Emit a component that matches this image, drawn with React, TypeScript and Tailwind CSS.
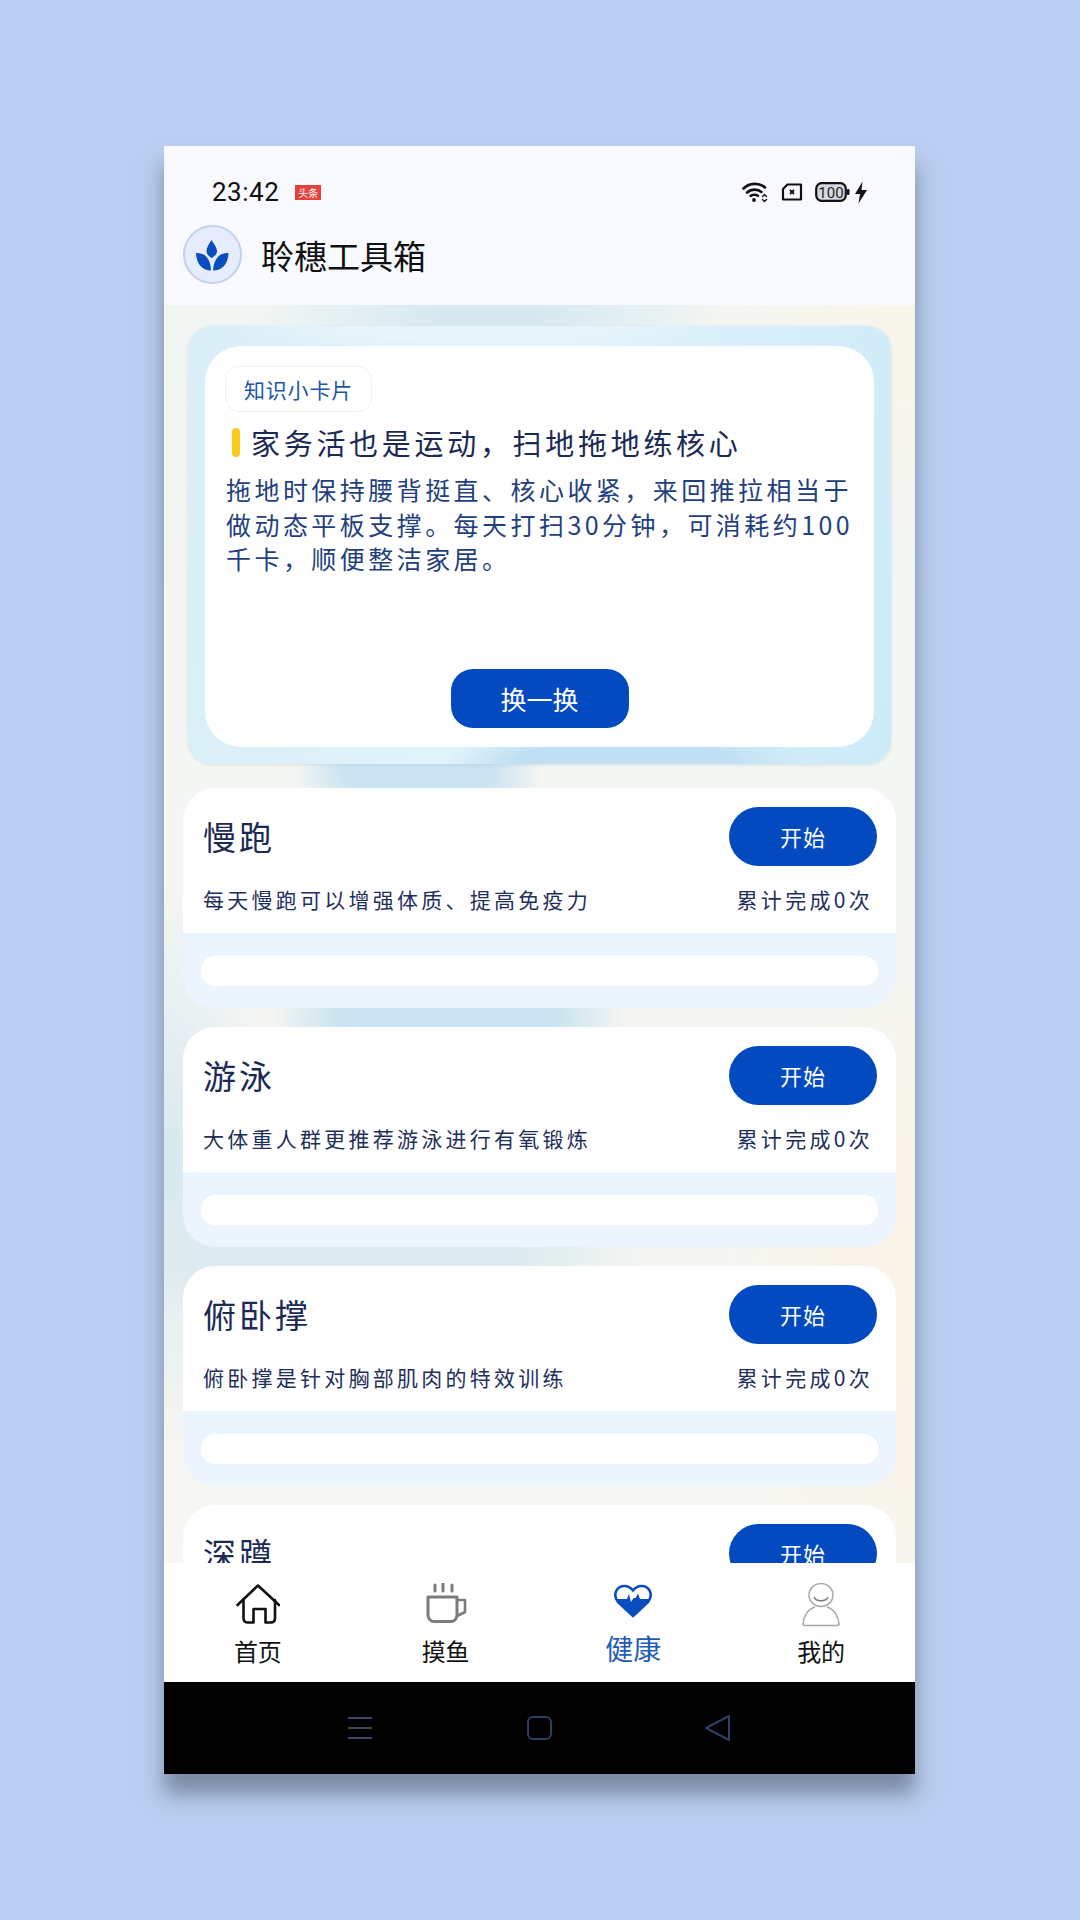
import React from "react";

const tasks = [
  { name: "慢跑", desc: "每天慢跑可以增强体质、提高免疫力" },
  { name: "游泳", desc: "大体重人群更推荐游泳进行有氧锻炼" },
  { name: "俯卧撑", desc: "俯卧撑是针对胸部肌肉的特效训练" },
  { name: "深蹲", desc: "" },
];

function TaskCard({ name, desc }: { name: string; desc: string }) {
  return (
    <div className="h-[220px] shrink-0 rounded-[32px] overflow-hidden bg-[#ecf4fd] flex flex-col">
      <div className="h-[145px] bg-white pl-[20px] pr-[19px] pt-[19px]">
        <div className="flex items-center justify-between h-[59px]">
          <span className="text-[33px] leading-[40px] tracking-[3px] text-[#1a2a55] -translate-y-[1px]">{name}</span>
          <button className="w-[148px] h-[59px] rounded-full bg-[#0349c0] text-white text-[22px] tracking-[1px]">开始</button>
        </div>
        {desc && (
          <div className="flex items-center justify-between mt-[18px] pr-[4px] text-[21px] leading-[30px] tracking-[3.25px] text-[#1f2f5c]">
            <span>{desc}</span>
            <span className="tracking-[3.3px]">累计完成0次</span>
          </div>
        )}
      </div>
      <div className="px-[18px] pt-[23px]">
        <div className="h-[30px] rounded-[14px] bg-white" />
      </div>
    </div>
  );
}

function TabLabel({ children, active }: { children: React.ReactNode; active?: boolean }) {
  return (
    <span className={active ? "text-[28px] leading-[36px] text-[#1f5cb8]" : "text-[24px] leading-[36px] text-[#111]"}>{children}</span>
  );
}

export default function App() {
  return (
    <div className="w-[1080px] h-[1920px] bg-[#b9cef0] pt-[146px] pl-[164px] overflow-hidden [font-family:'Noto_Sans_CJK_SC','Roboto',sans-serif]">
      <div className="w-[751px] h-[1628px] flex flex-col shadow-[0_20px_20px_rgba(60,70,90,0.5)]">
        {/* status + header */}
        <div className="h-[159px] shrink-0 bg-[#f8faff]">
          <div className="flex items-center justify-between h-[36px] pt-[28px] pl-[48px] pr-[47px] box-content">
            <div className="flex items-center">
              <span className="[font-family:'Roboto',sans-serif] text-[26px] leading-[32px] tracking-[0.5px] text-[#111]">23:42</span>
              <span className="ml-[16px] w-[26px] h-[15px] bg-[#e5413c] text-white text-[10px] leading-[15px] text-center">头条</span>
            </div>
            <div className="flex items-center">
              <svg width="27" height="22" viewBox="0 0 27 22" fill="none" stroke="#111" strokeLinecap="round">
                <path d="M1.5 7.5C7.5 1.5 17.5 1.5 23 6.5" strokeWidth="2.6" />
                <path d="M5 11.5C9 7.8 15.5 7.8 19.5 11" strokeWidth="2.6" />
                <path d="M8.5 15C10.5 13.3 14 13.3 16 14.8" strokeWidth="2.4" />
                <circle cx="12" cy="19" r="1.9" fill="#111" stroke="none" />
                <path d="M20.5 15.5l2-2 2 2M20.5 18.5l2 2 2-2" strokeWidth="1.4" />
              </svg>
              <svg className="ml-[12px]" width="22" height="18" viewBox="0 0 22 18" fill="none">
                <path d="M6.5 1.5H20V16.5H2V6Z" stroke="#111" strokeWidth="2.2" strokeLinejoin="round" />
                <path d="M9 7l4 4M13 7l-4 4" stroke="#111" strokeWidth="1.8" />
              </svg>
              <svg className="ml-[12px]" width="35" height="20" viewBox="0 0 35 20">
                <rect x="1.2" y="1.2" width="29.6" height="17.6" rx="5.5" fill="#d4d8e4" stroke="#111" strokeWidth="2.2" />
                <rect x="32" y="7" width="2.5" height="6" rx="1" fill="#111" />
                <text x="16" y="15.5" textAnchor="middle" fontSize="15" fill="#222" fontFamily="Roboto, sans-serif">100</text>
              </svg>
              <svg className="ml-[4px]" width="14" height="23" viewBox="0 0 14 23">
                <path d="M8.5 0.5L1 13h5l-1.5 9.5L13 9H7.5Z" fill="#111" />
              </svg>
            </div>
          </div>
          <div className="flex items-center pl-[19px] mt-[15px]">
            <div className="w-[59px] h-[59px] rounded-full bg-[#e6ecfb] border-2 border-[#c0d1ee] flex items-center justify-center">
              <svg width="35" height="32" viewBox="0 0 35 32" fill="#0a4dbf">
                <path d="M16.5 1C13.5 5.5 11.5 9 11.5 12C11.5 15 14 17.5 16.5 19C19.5 17.5 22 15 22 12C22 9 19.5 5.5 16.5 1Z" />
                <path d="M1 14C7 13.5 15.5 16.5 16 31.5C8 31.5 1.5 26 1 14Z" />
                <path d="M33.5 14C27.5 13.5 19 16.5 18 31.5C26.5 31.5 33 26 33.5 14Z" />
              </svg>
            </div>
            <span className="ml-[19px] text-[33px] leading-[44px] text-[#111]">聆穗工具箱</span>
          </div>
        </div>

        {/* scrolling content */}
        <div className="h-[1258px] shrink-0 overflow-hidden px-[19px] pt-[21px] flex flex-col bg-[radial-gradient(ellipse_240px_50px_at_325px_10px,#d6e9f1_20%,transparent_100%),radial-gradient(ellipse_125px_42px_at_255px_470px,#cbe4f2_60%,transparent_100%),radial-gradient(ellipse_180px_44px_at_285px_712px,#c9e3f0_60%,transparent_100%),radial-gradient(ellipse_300px_60px_at_190px_950px,#dcebef_55%,transparent_100%),radial-gradient(ellipse_110px_280px_at_0px_860px,#d6e8f2_0%,transparent_100%),radial-gradient(ellipse_200px_400px_at_100%_1000px,#fbf3e6_0%,transparent_100%),radial-gradient(ellipse_260px_220px_at_100%_40px,#f9f5ea_0%,transparent_100%),linear-gradient(#f2f6f3,#f6f6f2)]">
          <div className="mx-[5px] h-[438px] shrink-0 rounded-[24px] px-[17px] pt-[20px] bg-[radial-gradient(ellipse_180px_40px_at_62%_100%,#bfe0f2_60%,transparent_100%),radial-gradient(ellipse_240px_30px_at_40%_0%,#e6f4fb_50%,transparent_100%),linear-gradient(100deg,#d9eef8,#e2f3fa_45%,#cdebf9)] shadow-[0_1px_3px_rgba(120,150,180,0.25)]">
            <div className="h-[401px] rounded-[36px] bg-white pl-[21px] pr-[16px] pt-[20px] flex flex-col">
              <div className="w-[147px] -ml-[1px] h-[46px] rounded-[14px] border border-[#edf0f5] text-[#1a56a8] text-[21px] leading-[44px] text-center tracking-[0.8px]">知识小卡片</div>
              <div className="flex items-center mt-[12px] h-[36px]">
                <span className="w-[8px] h-[29px] rounded-full bg-[#fccb1d] ml-[6px]" />
                <span className="ml-[11px] text-[29px] leading-[36px] tracking-[3.7px] text-[#1a2a55] whitespace-nowrap">家务活也是运动，扫地拖地练核心</span>
              </div>
              <p className="mt-[12px] text-[25px] leading-[34.7px] tracking-[3.45px] text-[#1f3f80]">拖地时保持腰背挺直、核心收紧，来回推拉相当于做动态平板支撑。每天打扫30分钟，可消耗约100千卡，顺便整洁家居。</p>
              <div className="flex-1" />
              <button className="self-center mr-[5px] mb-[19px] w-[178px] h-[59px] rounded-[22px] bg-[#0349c0] text-white text-[26px] leading-[36px]">换一换</button>
            </div>
          </div>
          <div className="flex flex-col gap-[19px] mt-[24px]">
            {tasks.map((t) => (
              <TaskCard key={t.name} name={t.name} desc={t.desc} />
            ))}
          </div>
        </div>

        {/* tab bar */}
        <div className="h-[119px] shrink-0 bg-white grid grid-cols-4">
          <div className="flex flex-col items-center pt-[20px]">
            <svg className="h-[44px] -translate-y-[1px]" width="44" height="40" viewBox="0 0 44 40" fill="none" stroke="#111" strokeWidth="2.6" strokeLinecap="round" strokeLinejoin="round">
              <path d="M1.5 21L22 1.5L43 21" />
              <path d="M7.5 16V34C7.5 37 9.5 38.5 12 38.5H17.5V25H29.5V38.5H35C37.5 38.5 39 37 39 34V16" />
            </svg>
            <div className="mt-[6px]"><TabLabel>首页</TabLabel></div>
          </div>
          <div className="flex flex-col items-center pt-[20px]">
            <svg className="h-[44px]" width="44" height="44" viewBox="0 0 44 44" fill="none" stroke="#7c7c7c" strokeWidth="3" strokeLinecap="round" strokeLinejoin="round">
              <path d="M11 2V8M19 0.5V8M28 2V8" />
              <path d="M4 14H33V32C33 36 30 38.5 27 38.5H10C7 38.5 4 36 4 32Z" />
              <path d="M33 17H41V29L33 33" strokeWidth="2.6" />
            </svg>
            <div className="mt-[6px]"><TabLabel>摸鱼</TabLabel></div>
          </div>
          <div className="flex flex-col items-center pt-[21px]">
            <svg className="h-[34px]" width="38" height="34" viewBox="0 0 38 34">
              <path d="M19 32L4 18C-2 10 3 2 10.5 2C14 2 17 4 19 6.5C21 4 24 2 27.5 2C35 2 40 10 34 18Z" fill="#fff" stroke="#0a4dbf" strokeWidth="2.6" strokeLinejoin="round" />
              <path d="M2.5 15H13L15 10L17 18L19.5 14H21.5L24 9.5L26 15H35.5C35.5 16.5 35 17.5 34 18L19 32L4 18C3 17 2.7 16 2.5 15Z" fill="#0a4dbf" />
            </svg>
            <div className="mt-[12px]"><TabLabel active>健康</TabLabel></div>
          </div>
          <div className="flex flex-col items-center pt-[20px]">
            <svg className="h-[44px]" width="38" height="44" viewBox="0 0 38 44" fill="none" stroke="#a9a9a9" strokeWidth="1.5">
              <ellipse cx="19" cy="12" rx="12" ry="11.5" />
              <path d="M12 14C14 19 24 19 26 14" stroke="#777" />
              <path d="M13 24C6 26 1.5 33 1 41C1 42 2 42.5 3 42.5H35C36 42.5 37 42 37 41C36.5 33 32 26 25 24" />
            </svg>
            <div className="mt-[6px]"><TabLabel>我的</TabLabel></div>
          </div>
        </div>

        {/* nav bar */}
        <div className="h-[92px] shrink-0 bg-black flex items-center pl-[184px]">
          <div className="w-[24px] h-[22px] flex flex-col justify-between">
            <span className="h-[2px] bg-[#3c4666]" />
            <span className="h-[2px] bg-[#3c4666]" />
            <span className="h-[2px] bg-[#3c4666]" />
          </div>
          <div className="ml-[155px] w-[25px] h-[24px] rounded-[6px] border-2 border-[#2f3d66]" />
          <svg className="ml-[152px]" width="27" height="28" viewBox="0 0 27 28" fill="none">
            <path d="M25 2V26L2 14Z" stroke="#2f3d66" strokeWidth="2" strokeLinejoin="round" />
          </svg>
        </div>
      </div>
    </div>
  );
}
